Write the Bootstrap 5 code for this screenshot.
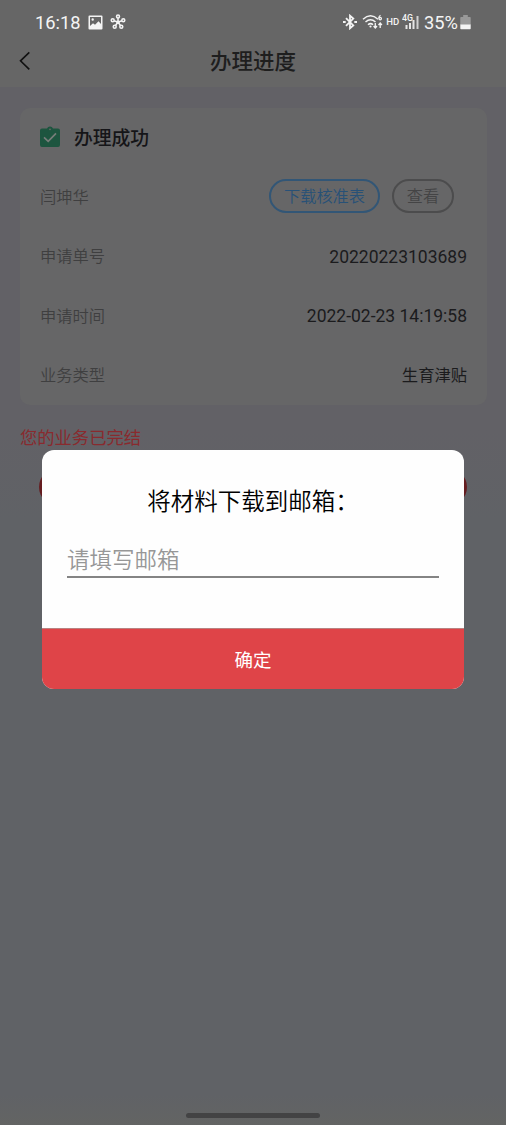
<!DOCTYPE html>
<html lang="zh-CN">
<head>
<meta charset="utf-8">
<meta name="viewport" content="width=device-width, initial-scale=1">
<title>办理进度</title>
<link href="https://cdn.jsdelivr.net/npm/bootstrap@5.3.0/dist/css/bootstrap.min.css" rel="stylesheet">
<style>
body{font-family:Roboto,"Noto Sans CJK SC",sans-serif;background:linear-gradient(#626166 0,#626166 430px,#606266 520px,#606266 1095px,#636463 1125px);height:1125px;overflow:hidden;color:#1c1c1e}
.top-area{background:#666;height:87px}
.status-line{height:44px;padding:1px 35px 0 35px;color:#f4f4f4;font-size:18.3px;line-height:44px}
.status-line svg{display:block;flex:none;margin-top:-1px}
.status-line .clock-text{width:46px}
.title-line{height:36px}
.title-line h1{font-size:21.5px;font-weight:500;color:#1e1e1e;line-height:36px}
.back-btn{left:18px;top:6px;width:24px;height:24px;line-height:0}
.progress-card{margin:21px 19px 0 20px;padding:0 20px;border:0;border-radius:10px;background:#666667;color:#1b1b1d}
.info-row{height:59.4px;font-size:16.3px;padding-top:2px}
.info-row .caption{color:#3f3f40;font-weight:350}
.info-row .digits{font-size:17.5px;margin-top:-1px}
.info-row h2{font-size:18.8px;font-weight:500;color:#151518;padding:2px 0 0 14px}
.pill{height:34px;border:2px solid #4c4c4d;border-radius:17px;padding:1px 0 0;font-size:16.2px;line-height:30px;color:#444445;font-weight:350}
.pill-blue{border-color:#325676;color:#285177;width:111px}
.pill-gray{width:62px}
.pill-set{gap:12px;padding-right:13px;margin-top:-4px}
.done-note{margin:18px 20px 0;font-size:17.3px;line-height:30px;color:#892a2e;font-weight:400}
.main-action{height:38px;margin:15px 39px 0;border-radius:19px;background:#651d20;border:0}
.dialog-box{left:42px;top:450px;width:422px;height:239px;border-radius:12px;background:#fefefe;overflow:hidden}
.dialog-box h3{font-size:23.5px;line-height:34px;margin:35px 0 0;font-weight:350;color:#000}
.mail-input{margin:16px 25px 0;width:372px;height:43px;border:0;border-bottom:2px solid #848484;border-radius:0;background:transparent;padding:8px 0 0;font-size:22.5px;line-height:34px;font-weight:350;box-shadow:none;outline:0}
.mail-input::placeholder{color:#979797;opacity:1}
.confirm-btn{height:61px;border:0;border-top:1px solid #b98280;border-radius:0;background:#df4448;color:#fff;font-size:18.5px;padding:5px 0 0}
.home-bar{left:186px;top:1113px;width:134px;height:5px;border-radius:3px;background:#434344}
</style>
</head>
<body class="position-relative">
<header class="top-area">
  <div class="status-line d-flex align-items-center">
    <span class="clock-text">16:18</span>
    <svg style="margin-left:7px" width="15" height="15" viewBox="0 0 15 15"><path fill="#f4f4f4" fill-rule="evenodd" d="M1.500.5h12a1 1 0 0 1 1 1v12a1 1 0 0 1-1 1h-12a1 1 0 0 1-1-1v-12a1 1 0 0 1 1-1zM2 2v9l3-2.700 2 1.400 3.500-3.400L13 9V2zM4.700 3.300a1.200 1.200 0 1 1 0 2.400 1.200 1.200 0 0 1 0-2.400z"/></svg>
    <svg style="margin-left:7px" width="16" height="16" viewBox="0 0 16 16" fill="none" stroke="#f4f4f4" stroke-width="1.500"><path d="M8 8V4M8 8l4.200-1.300M8 8l2.800 4M8 8l-2.800 4M8 8 3.800 6.700"/><g fill="#777"><circle cx="8" cy="2.600" r="1.500"/><circle cx="13.300" cy="6.300" r="1.500"/><circle cx="11.300" cy="12.700" r="1.500"/><circle cx="4.700" cy="12.700" r="1.500"/><circle cx="2.700" cy="6.300" r="1.500"/></g><circle cx="8" cy="8.200" r="1.600" fill="#f4f4f4" stroke="none"/></svg>
    <div class="ms-auto d-flex align-items-center">
      <svg width="14" height="16" viewBox="0 0 14 16" fill="none" stroke="#f4f4f4" stroke-width="1.800"><path d="m3 4.200 7.300 7.200L7 14.300V1.700l3.300 2.900L3 11.800"/><path d="M0 8h2.700M11.300 8H14"/></svg>
      <svg style="margin-left:5px" width="22" height="16" viewBox="0 0 22 16" fill="none" stroke="#f4f4f4" stroke-width="1.500"><path d="M1 5.200q7.500-6.800 15 0M3.500 8q5-4.400 10 0M6 10.700q2.600-2.200 5 0"/><circle cx="8.500" cy="12.500" r="1.100" fill="#f4f4f4" stroke="none"/><g stroke-width="1.300"><path d="M18.500 1.300q-1.700 1-1.700 3"/><circle cx="18.200" cy="4.600" r="1.200"/><path d="M13.300 9v5m-1.700-2 1.700 2 1.700-2M18.200 14V9m-1.700 2 1.700-2 1.700 2"/></g></svg>
      <svg style="margin-left:2px" width="14" height="14" viewBox="0 0 14 14"><text x=".3" y="9.900" fill="#f4f4f4" font-size="9.800" font-weight="500" textLength="13" lengthAdjust="spacingAndGlyphs">HD</text></svg>
      <svg style="margin-left:2px" width="18" height="18" viewBox="0 0 18 18" fill="#f4f4f4"><text x="0" y="8" font-size="8.800" font-weight="500" textLength="11" lengthAdjust="spacingAndGlyphs">4G</text><path d="M3.500 12h2v4h-2zM7 10h2v6H7zM10.500 7h2v9h-2z" opacity=".9"/><path d="M14.500 3h2v13h-2z" opacity=".75"/></svg>
      <span style="margin-left:4px">35%</span>
      <svg style="margin-left:2px" width="11" height="16" viewBox="0 0 11 16"><path fill="#999" d="M3.200 1h4.600v2H10q.7 0 .7.700V11H.3V3.700Q.3 3 1 3h2.200z"/><path fill="#f4f4f4" d="M.3 10.500h10.400v4q0 .7-.7.700H1q-.7 0-.7-.7z"/></svg>
    </div>
  </div>
  <div class="title-line position-relative text-center">
    <button class="back-btn btn p-0 border-0 position-absolute" aria-label="返回"><svg width="24" height="24" viewBox="0 0 24 24" fill="none" stroke="#111" stroke-width="1.600"><path d="m11.300 2.300-8.800 8.500 8.800 8.500"/></svg></button>
    <h1 class="m-0">办理进度</h1>
  </div>
</header>
<main>
  <section class="card progress-card">
    <div class="info-row d-flex align-items-center">
      <svg style="margin-top:-4px" width="20" height="22" viewBox="0 0 20 22"><path fill="#1d553f" d="M2 2.500h5a3.200 3.200 0 0 1 6 0h5q2 0 2 2V19q0 2-2 2H2q-2 0-2-2V4.500q0-2 2-2z"/><path fill="none" stroke="#777d7a" stroke-width="1.700" d="m4 11.300 4.200 4 7.800-8"/><circle cx="10" cy="3.300" r=".9" fill="#666"/></svg>
      <h2 class="mb-0">办理成功</h2>
    </div>
    <div class="info-row d-flex align-items-center"><span class="caption">闫坤华</span>
      <div class="ms-auto d-flex pill-set"><button class="btn pill pill-blue">下载核准表</button><button class="btn pill pill-gray">查看</button></div>
    </div>
    <div class="info-row d-flex align-items-center justify-content-between"><span class="caption">申请单号</span><span class="digits">20220223103689</span></div>
    <div class="info-row d-flex align-items-center justify-content-between"><span class="caption">申请时间</span><span class="digits">2022-02-23 14:19:58</span></div>
    <div class="info-row d-flex align-items-center justify-content-between"><span class="caption">业务类型</span><span>生育津贴</span></div>
  </section>
  <p class="done-note mb-0">您的业务已完结</p>
  <div class="main-action"></div>
</main>
<div class="dialog-box position-absolute d-flex flex-column" role="dialog">
  <h3 class="text-center">将材料下载到邮箱：</h3>
  <input class="form-control mail-input" type="email" placeholder="请填写邮箱">
  <button class="btn confirm-btn w-100 mt-auto">确定</button>
</div>
<div class="home-bar position-absolute"></div>
<script src="https://cdn.jsdelivr.net/npm/bootstrap@5.3.0/dist/js/bootstrap.bundle.min.js"></script>
</body>
</html>
